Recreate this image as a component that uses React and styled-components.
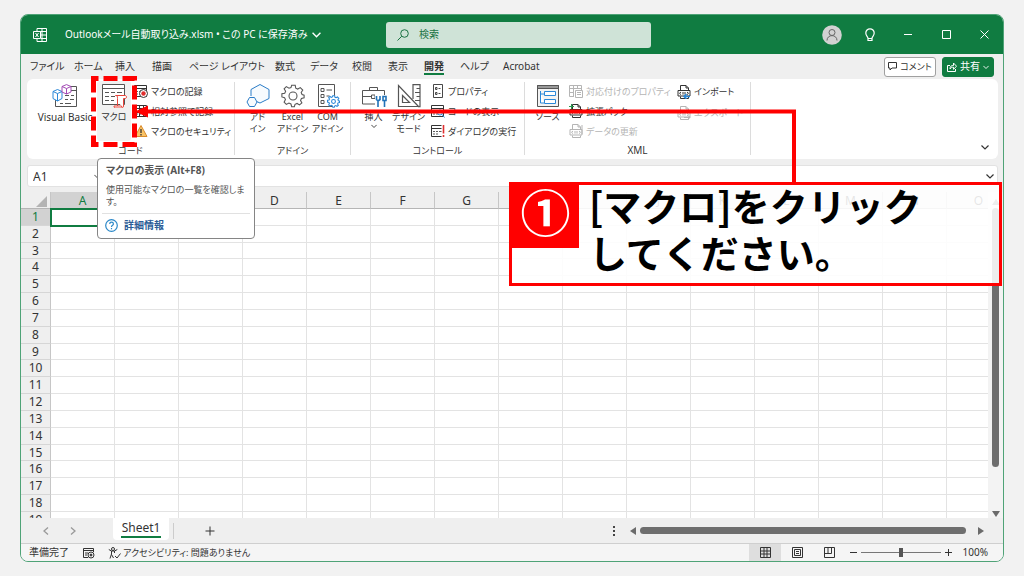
import React from 'react';
import styled, { createGlobalStyle } from 'styled-components';

const GlobalStyle = createGlobalStyle`
* {
    box-sizing: border-box;
}

body {
    margin: 0;
    background-color: #f2f2f2;
    font-family: "Noto Sans", "Noto Sans CJK JP", sans-serif;
    font-feature-settings: "palt";
    font-size: 10px;
    line-height: 13px;
    color: #333;
}

button, input {
    margin: 0;
    padding: 0;
    border: 0;
    background: none;
    font: inherit;
    font-feature-settings: inherit;
    color: inherit;
}

a {
    color: inherit;
    text-decoration: none;
}

svg {
    display: block;
    flex: none;
}
`;

const Page = styled.div`
display: flex;
height: 100vh;
padding: 14px 20px;
`;

const Window = styled.div`
position: relative;
flex: 1;
min-width: 0;
display: flex;
flex-direction: column;
border: 1px solid #4fa377;
border-radius: 8px;
background-color: #efefef;
`;

const TitleBar = styled.header`
display: grid;
grid-template-columns: 365fr 265fr 352fr;
align-items: center;
height: 39px;
flex: none;
border-radius: 7px 7px 0 0;
background-color: #107c41;
color: white;
`;

const FileTitle = styled.div`
display: flex;
align-items: center;
gap: 18px;
padding-left: 12px;
white-space: nowrap;

span {
    display: flex;
    align-items: center;
    gap: 4px;
}
`;

const SearchBox = styled.label`
display: flex;
align-items: center;
gap: 10px;
height: 26px;
padding-left: 11px;
border-radius: 3px;
background-color: #cfe3d7;
color: #1a7344;

input {
    flex: 1;
    min-width: 0;
    outline: none;
}

input::placeholder {
    color: #1a7344;
    opacity: 1;
}
`;

const WindowButtons = styled.div`
display: flex;
justify-content: flex-end;

button {
    display: flex;
    align-items: center;
    justify-content: center;
    width: 38px;
    height: 38px;
}
`;

const TabRow = styled.nav`
display: flex;
align-items: center;
height: 25px;
flex: none;
padding: 0 9px;
`;

const Tab = styled.a`
width: ${(props) => props.$width}px;
white-space: nowrap;
font-weight: ${(props) => (props.$active ? 700 : 400)};

span {
    display: inline-block;
    height: 16px;
    padding-top: 1px;
    border-bottom: 2px solid ${(props) => (props.$active ? '#107c41' : 'transparent')};
}
`;

const TabActions = styled.div`
display: flex;
gap: 6px;
margin-left: auto;
`;

const ActionButton = styled.button`
display: flex;
align-items: center;
justify-content: center;
gap: 3px;
width: 52px;
height: 20px;
border: 1px solid ${(props) => (props.$green ? '#107c41' : '#a0a0a0')};
border-radius: 3px;
background-color: ${(props) => (props.$green ? '#107c41' : 'white')};
color: ${(props) => (props.$green ? 'white' : '#333')};
font-size: ${(props) => (props.$green ? 10 : 9)}px;
white-space: nowrap;
`;

const Ribbon = styled.section`
display: flex;
flex: none;
margin: 0 5px 0 6px;
padding-top: 2px;
height: 80px;
border-radius: 6px;
background-color: white;
`;

const Group = styled.div`
display: flex;
flex-direction: column;
flex: none;
width: ${(props) => props.$width}px;
`;

const GroupBody = styled.div`
display: flex;
gap: ${(props) => props.$gap || 0}px;
height: 60px;
padding-left: ${(props) => props.$left || 5}px;
`;

const GroupLabel = styled.div`
padding-top: 3px;
font-size: ${(props) => props.$size || 9}px;
text-align: center;
`;

const Separator = styled.div`
width: 1px;
margin: 1px 0 4px;
background-color: #dcdcdc;
`;

const BigButton = styled.button`
display: flex;
flex-direction: column;
align-items: center;
width: ${(props) => props.$width || 35}px;
height: 60px;
padding-top: 3px;
border-radius: 3px;
background-color: ${(props) => (props.$hover ? '#f1f1f1' : 'transparent')};
font-size: ${(props) => props.$size || 9}px;
line-height: 12px;
white-space: nowrap;

svg {
    margin-bottom: 3px;
}
`;

const SmallList = styled.div`
display: flex;
flex-direction: column;
width: ${(props) => props.$width || 90}px;
margin-left: ${(props) => props.$left || 0}px;
`;

const SmallButton = styled.button`
display: flex;
align-items: center;
gap: 3px;
height: 21px;
color: ${(props) => (props.disabled ? '#b5b5b5' : '#333')};
font-size: 9px;
white-space: nowrap;
`;

const CollapseButton = styled.button`
align-self: flex-end;
margin: 0 9px 8px auto;
`;

const FormulaBar = styled.div`
display: flex;
align-items: center;
flex: none;
height: 22px;
margin: 6px 5px 5px 6px;
border: 1px solid #e2e2e2;
border-radius: 3px;
background-color: white;

input {
    outline: none;
    font-size: 12px;
}

input:first-child {
    width: 66px;
    padding-left: 5px;
}

input:nth-of-type(2) {
    flex: 1;
    min-width: 0;
}

button {
    padding-right: 3px;
}
`;

const SheetArea = styled.div`
display: flex;
flex: 1;
min-height: 0;
`;

const SheetClip = styled.div`
flex: 1;
min-width: 0;
overflow: hidden;
`;

const Sheet = styled.table`
table-layout: fixed;
width: 990px;
height: 337px;
border-collapse: separate;
border-spacing: 0;
background-color: white;
font-size: 12px;
line-height: 14px;

th {
    padding: 0;
    font-weight: 400;
    background-color: #efefef;
    border-right: 1px solid #c6c6c6;
    border-bottom: 1px solid #d6d6d6;
    overflow: hidden;
}

thead th {
    height: 17px;
    padding-top: 2px;
    border-bottom-color: #b5b5b5;
}

td {
    padding: 0;
    border-right: 1px solid #e3e3e3;
    border-bottom: 1px solid #e3e3e3;
}

th.current {
    background-color: #d2d2d2;
    color: #107c41;
}

td.current {
    outline: 2px solid #107c41;
    outline-offset: -1px;
}

col:first-child {
    width: 30px;
}

thead th:first-child svg {
    margin: 0 3px 0 auto;
}
`;

const VerticalScroll = styled.div`
display: flex;
flex-direction: column;
align-items: center;
gap: 2px;
width: 15px;
padding: 6px 0 0;
background-color: #f3f3f3;

div {
    width: 7px;
    height: 259px;
    border-radius: 4px;
    background-color: #6e6e6e;
}

svg:last-child {
    margin-top: auto;
}
`;

const SheetBar = styled.div`
display: flex;
align-items: center;
flex: none;
height: 25px;
padding: 0 14px 0 20px;
`;

const SheetNav = styled.div`
display: flex;
gap: 17px;
width: 72px;
color: #999;
`;

const SheetTab = styled.button`
align-self: flex-start;
width: 56px;
height: 22px;
border-radius: 0 0 4px 4px;
background-color: white;
font-size: 12px;

span {
    display: inline-block;
    height: 18px;
    padding: 1px 1px 0;
    border-bottom: 2px solid #107c41;
}
`;

const AddSheet = styled.button`
margin-left: 4px;
padding-left: 31px;
border-left: 1px solid #ccc;
`;

const HorizontalScroll = styled.div`
display: flex;
align-items: center;
margin-left: auto;
width: 377px;

div {
    width: 326px;
    height: 7px;
    margin: 0 11px 0 3px;
    border-radius: 4px;
    background-color: #6e6e6e;
}

svg:first-child {
    margin-right: 13px;
}
`;

const StatusBar = styled.footer`
display: flex;
align-items: center;
flex: none;
height: 18px;
padding: 0 15px 0 8px;
border-top: 1px solid #cfcfcf;
border-radius: 0 0 7px 7px;
background-color: #f5f5f5;
font-size: 10px;
white-space: nowrap;
`;

const StatusItem = styled.div`
display: flex;
align-items: center;
gap: 2px;
margin-right: ${(props) => props.$space || 0}px;
font-size: ${(props) => props.$size || 10}px;
`;

const Views = styled.div`
display: flex;
margin-left: auto;
margin-right: 5px;
`;

const ViewButton = styled.button`
display: flex;
align-items: center;
justify-content: center;
width: 32px;
height: 17px;
background-color: ${(props) => (props.$active ? '#dedede' : 'transparent')};
`;

const Zoom = styled.div`
display: flex;
align-items: center;
gap: 4px;

input {
    appearance: none;
    width: 80px;
    height: 1px;
    background-color: #777;
}

input::-webkit-slider-thumb {
    appearance: none;
    width: 4px;
    height: 9px;
    background-color: #555;
}

span {
    width: 32px;
    text-align: right;
}
`;

const Tooltip = styled.div`
position: absolute;
top: 143px;
left: 76px;
width: 158px;
height: 81px;
padding: 5px 4px;
border: 1px solid #858585;
border-radius: 4px;
background-color: white;
color: #555;

h4 {
    margin: 0 0 7px 4px;
    font-size: 10px;
}

p {
    margin: 0 0 5px 4px;
    font-size: 9px;
    line-height: 12px;
}

a {
    display: flex;
    align-items: center;
    gap: 6px;
    padding: 5px 3px 0;
    border-top: 1px solid #e1e1e1;
    color: #2b5c96;
    font-weight: 700;
}
`;

const Marks = styled.svg`
position: absolute;
top: 59px;
left: 68px;
pointer-events: none;
`;

const Callout = styled.aside`
position: absolute;
top: 167px;
left: 488px;
display: flex;
width: 493px;
height: 104px;
border: 3px solid #f00;
background-color: rgba(255, 255, 255, 0.88);
font-family: "Noto Sans CJK JP", sans-serif;
font-feature-settings: normal;
color: black;

strong {
    width: 67px;
    height: 63px;
    background-color: #f00;
    color: white;
    font-size: 50px;
    line-height: 50px;
    text-align: center;
}

p {
    margin: -4px 0 0 10px;
    font-size: 38px;
    font-weight: 700;
    line-height: 47px;
    white-space: nowrap;
}
`;

const line = { fill: 'none', stroke: 'currentColor', strokeWidth: 1 };

const Chevron = ({ size = 8 }) => (
    <svg width={size} height={size} viewBox="0 0 8 8" {...line} strokeWidth="1.2"><path d="M.5 2.500L4 6l3.500-3.500" /></svg>
);

const VisualBasicIcon = () => (
    <svg width="26" height="24" viewBox="0 0 26 24" fill="none" stroke="#555">
        <path d="M3.500 14v8.500h21V2.500h-6M19 6.500h6M13 11.500h4m2 0h3M13 15.500h3m2 0h4M8 19.500h3m2 0h6" />
        <path d="M1 7.500l4.500-2 4.500 2v7L5.500 17 1 14.500zM1 7.500l4.500 2 4.500-2M5.500 9.500V17" fill="white" stroke="#2b88d8" />
        <path d="M10 2.500L14.500.6 19 2.500V8l-4.500 2L10 8zM10 2.500l4.500 2 4.500-2M14.500 4.500V10" fill="white" stroke="#a34bb5" />
    </svg>
);

const MacroIcon = () => (
    <svg width="26" height="24" viewBox="0 0 26 24" fill="none" stroke="#555">
        <path d="M1.500.5h22v20h-22z" fill="white" />
        <path d="M1.500 4.500h22M4 8.500h4m2 0h4m2 0h5M4 12.500h4m2 0h4M4 16.500h4m2 0h3" />
        <path d="M14.500 11.500h9.500c2 0 2 3 0 3h-1.500v7.500c0 2-2 2-2 0H13c0 1.800.8 2 2 2h6M14.500 11.500c2 0 2 1 2 3V22" fill="white" stroke="#e8443a" />
    </svg>
);

const HexIcon = () => (
    <svg width="24" height="24" viewBox="0 0 24 24" fill="#f7fbfe" stroke="#2b7cc7">
        <path d="M8.500 1.500h9l5.500 5-2.500 9-8 3.500L5 13V5z" stroke="none" />
        <path d="M5 12V5.500l9-5 9 5v9L14 19l-3.500-1.500" />
        <path d="M3.500 13.500h5L11 18l-2.500 4.500h-5L1 18z" />
    </svg>
);

const gearPath = 'M10 1h4l.6 3.200 2.200 1 2.900-1.700 2.800 2.800-1.800 2.800 1 2.300L24 12v3l-3 .8-1 2.300 1.500 2.700-2.700 2.200-2.700-1.600-2.300 1L13 25h-3l-.8-3-2.300-1L4 22.500 1.500 20 3 17l-1-2-3-1v-3.500l3.200-.6 1-2.200L1.500 5 4 2.500l3 1.800 2.200-.8z';

const GearIcon = () => (
    <svg width="24" height="24" viewBox="-2 0 27 26" fill="none" stroke="#555" strokeWidth="1.200">
        <path d={gearPath} />
        <circle cx="11.500" cy="13" r="4.500" />
    </svg>
);

const ComIcon = () => (
    <svg width="24" height="24" viewBox="0 0 24 24" fill="none" stroke="#555">
        <path d="M2.500.5h16v22h-16zM5 4.500h3v3H5zM5 10.500h3v3H5zM5 16.500h3v3H5zM10.500 6H16M10.500 12h3" />
        <svg x="11" y="11" width="13" height="13" viewBox="-2 0 27 26" stroke="#2b88d8" strokeWidth="2.200">
            <path d={gearPath} fill="white" />
            <circle cx="11.500" cy="13" r="4" />
        </svg>
    </svg>
);

const ToolboxIcon = () => (
    <svg width="26" height="24" viewBox="0 0 26 24" fill="none" stroke="#555">
        <path d="M1.500 6.500h22V20h-22zM8.500 6.500v-3h8v3M1.500 12.500h9M14 12.500h9M10.500 11h3.500v3.500h-3.500z" />
        <path d="M14 11h12v13H14z" fill="white" stroke="none" />
        <path d="M15.500 12v3.500l1.500 1.500V23M19 12v3.500L17 17M22 12.500h3v4h-3zM23.500 16.500V23" stroke="#2072b8" strokeWidth="1.600" />
    </svg>
);

const DesignIcon = () => (
    <svg width="24" height="24" viewBox="0 0 24 24" fill="none" stroke="#555" strokeWidth="1.200">
        <path d="M1.500 1.500v21h20zM5.500 11.500v7h7z" />
        <path d="M16 15V.6h7v22h-2M19.500 4.500H23M18 8.500h5M19.500 12.500H23M18 16.500h5" />
    </svg>
);

const SourceIcon = () => (
    <svg width="24" height="24" viewBox="0 0 24 24" fill="none" stroke="#555">
        <path d="M1.500 1.500h21v21h-21z" fill="#f3f3f3" />
        <path d="M1.500 1.500h21v3h-21z" fill="#999" />
        <path d="M4.500 7v12H8M4.500 10H8M8.500 7.500h11v4h-11zM8.500 15.500h11v4h-11z" stroke="#2b88d8" fill="#fff" />
    </svg>
);

const SheetLines = ({ children, ...rest }) => (
    <svg width="14" height="14" viewBox="0 0 14 14" {...line} {...rest}>
        <path d="M.5 1.500h12v11H.5zM.5 4.500h12" />
        <path d="M2 7.500h2m1 0h2m1 0h3M2 10h2m1 0h2" strokeWidth=".8" />
        {children}
    </svg>
);

const RecordIcon = () => (
    <SheetLines>
        <circle cx="9.500" cy="9.500" r="4" fill="white" />
        <circle cx="9.500" cy="9.500" r="2.200" fill="#e03030" stroke="none" />
    </SheetLines>
);

const RelativeIcon = () => (
    <SheetLines><path d="M5.500 1.500v11M9.500 1.500v11M.5 8.500h12" /><path d="M6 5h3v3H6z" fill="#e03030" stroke="none" /></SheetLines>
);

const WarningIcon = () => (
    <svg width="14" height="14" viewBox="0 0 14 14">
        <path d="M7 1.500L13 12.500H1z" fill="#f8c367" stroke="#d98a2b" strokeLinejoin="round" />
        <path d="M7 5v4M7 10v1.500" stroke="#333" strokeWidth="1.300" />
    </svg>
);

const PropertyIcon = () => (
    <svg width="14" height="14" viewBox="0 0 14 14" {...line} strokeWidth=".9">
        <path d="M2.500.5h9v13h-9zM4.500 3.500H6v2H4.500zM4.500 8.500H6v2H4.500zM7.500 4.500h2M7.500 9.500h2" />
    </svg>
);

const CodeIcon = () => (
    <SheetLines><circle cx="9" cy="8.500" r="2.500" fill="white" stroke="#2b88d8" /><path d="M11 10.500l2.500 3" stroke="#2b88d8" /></SheetLines>
);

const DialogIcon = () => (
    <SheetLines><path d="M10.500 0h4v14h-4z" fill="white" stroke="none" /><path d="M12.500 1v8.500M12.500 11v2" stroke="#e03030" strokeWidth="1.600" /></SheetLines>
);

const MapIcon = () => (
    <svg width="14" height="14" viewBox="0 0 14 14" {...line}>
        <path d="M5 12.500H.5v-11h12V6M.5 4.500h12M.5 8.500H5M4.500 1.500v11M8.500 1.500V5" />
        <path d="M6.500 6.500h7v7h-7zM8 8.500h4M8 10.500h4" />
    </svg>
);

const XmlIcon = ({ children }) => (
    <svg width="14" height="14" viewBox="0 0 14 14" {...line}>
        <path d="M3.500 5V.5h5.500l2.500 2.500v2M9 .5V3h2.500M3.500 11.500v2h8v-2M1 5.500h12v5.500H1z" />
        <path d="M4 7L2.500 8.300 4 9.600M10 7l1.500 1.300L10 9.600M6 7v2.600M8 7v2.600" />
        {children}
    </svg>
);

const Triangle = ({ rotate = 0 }) => (
    <svg width="8" height="8" viewBox="0 0 8 8"><path d="M4 1L8 7H0z" fill="#6b6b6b" transform={`rotate(${rotate} 4 4)`} /></svg>
);

const tabs = [
    ['ファイル', 44], ['ホーム', 41], ['挿入', 37], ['描画', 37], ['ページ レイアウト', 86], ['数式', 35],
    ['データ', 42], ['校閲', 36], ['表示', 36], ['開発', 36], ['ヘルプ', 43], ['Acrobat', 44],
];

const columns = 'ABCDEFGHIJKLMNO'.split('');
const rows = Array.from({ length: 19 }, (_, i) => i + 1);

const App = () => {
    return (
        <Page>
            <GlobalStyle />
            <Window>
                <TitleBar>
                    <FileTitle>
                        <svg width="14" height="14" viewBox="0 0 14 14" fill="none" stroke="white">
                            <path d="M4 3.500v-3h9.500v13H4v-3M4 3.500h9.500M8 7h5.500M8 10.500h5.500M9 .5v13" />
                            <path d="M.5 3.500h7v7h-7z" fill="#107c41" />
                            <path d="M2.500 5l3 4M5.500 5l-3 4" />
                        </svg>
                        <span>Outlookメール自動取り込み.xlsm • この PC に保存済み <Chevron size={9} /></span>
                    </FileTitle>
                    <SearchBox>
                        <svg width="12" height="12" viewBox="0 0 12 12" {...line}><circle cx="7.500" cy="4.500" r="3.800" /><path d="M4.800 7.200L.5 11.500" /></svg>
                        <input type="search" placeholder="検索" aria-label="検索" />
                    </SearchBox>
                    <WindowButtons>
                        <button aria-label="アカウント">
                            <svg width="20" height="20" viewBox="0 0 20 20" fill="none" stroke="#666">
                                <circle cx="10" cy="10" r="9.800" fill="#d2d2d2" stroke="none" />
                                <circle cx="10" cy="7.500" r="3" /><path d="M5 15.500c0-6.500 10-6.500 10 0" />
                            </svg>
                        </button>
                        <button aria-label="ヒント">
                            <svg width="14" height="14" viewBox="0 0 14 14" {...line} strokeWidth="1.200"><path d="M5 10.500C5 8.500 2.800 8 2.800 5a4.200 4.200 0 018.400 0c0 3-2.200 3.500-2.200 5.500zM5 10.500v2h4v-2" /></svg>
                        </button>
                        <button aria-label="最小化"><svg width="8" height="8" {...line}><path d="M0 3.500h8" /></svg></button>
                        <button aria-label="最大化"><svg width="9" height="9" {...line}><path d="M.5.5h8v8h-8z" /></svg></button>
                        <button aria-label="閉じる"><svg width="9" height="9" {...line}><path d="M.5.5l8 8M8.500.5l-8 8" /></svg></button>
                    </WindowButtons>
                </TitleBar>

                <TabRow>
                    {tabs.map(([name, width]) => (
                        <Tab key={name} href="#" $width={width} $active={name === '開発'}><span>{name}</span></Tab>
                    ))}
                    <TabActions>
                        <ActionButton>
                            <svg width="9" height="9" viewBox="0 0 9 9" {...line}><path d="M.5.5h8v5.500H4L2 8V6H.5z" /></svg>
                            コメント
                        </ActionButton>
                        <ActionButton $green>
                            <svg width="10" height="10" viewBox="0 0 10 10" {...line}><path d="M3 3.500H.5v6h8V7M3 7c0-3 1.500-3.500 3.500-3.500V1l3 3.200-3 3.200V5.200C5 5.200 4 5.500 3 7z" /></svg>
                            共有 <Chevron size={6} />
                        </ActionButton>
                    </TabActions>
                </TabRow>

                <Ribbon>
                    <Group $width={207}>
                        <GroupBody $left={9} $gap={3}>
                            <BigButton $width={58} $size={10}><VisualBasicIcon />Visual Basic</BigButton>
                            <BigButton $width={34} $hover><MacroIcon />マクロ</BigButton>
                            <SmallList>
                                <SmallButton><RecordIcon />マクロの記録</SmallButton>
                                <SmallButton><RelativeIcon />相対参照で記録</SmallButton>
                                <SmallButton><WarningIcon />マクロのセキュリティ</SmallButton>
                            </SmallList>
                        </GroupBody>
                        <GroupLabel>コード</GroupLabel>
                    </Group>
                    <Separator />
                    <Group $width={115}>
                        <GroupBody>
                            <BigButton><HexIcon />アド<br />イン</BigButton>
                            <BigButton><GearIcon />Excel<br />アドイン</BigButton>
                            <BigButton><ComIcon />COM<br />アドイン</BigButton>
                        </GroupBody>
                        <GroupLabel>アドイン</GroupLabel>
                    </Group>
                    <Separator />
                    <Group $width={173}>
                        <GroupBody>
                            <BigButton><ToolboxIcon />挿入<Chevron size={6} /></BigButton>
                            <BigButton><DesignIcon />デザイン<br />モード</BigButton>
                            <SmallList $left={5}>
                                <SmallButton><PropertyIcon />プロパティ</SmallButton>
                                <SmallButton><CodeIcon />コードの表示</SmallButton>
                                <SmallButton><DialogIcon />ダイアログの実行</SmallButton>
                            </SmallList>
                        </GroupBody>
                        <GroupLabel>コントロール</GroupLabel>
                    </Group>
                    <Separator />
                    <Group $width={225}>
                        <GroupBody>
                            <BigButton><SourceIcon />ソース</BigButton>
                            <SmallList $width={108} $left={4}>
                                <SmallButton disabled><MapIcon />対応付けのプロパティ</SmallButton>
                                <SmallButton><XmlIcon><path d="M2.500 0v5M0 2.500h5" stroke="#2a9a50" /></XmlIcon>拡張パック</SmallButton>
                                <SmallButton disabled><XmlIcon><path d="M13 1v9" /></XmlIcon>データの更新</SmallButton>
                            </SmallList>
                            <SmallList $width={70}>
                                <SmallButton><XmlIcon><path d="M13 11.500H7M9.500 9L7 11.500 9.500 14" stroke="#2b88d8" strokeWidth="1.500" /></XmlIcon>インポート</SmallButton>
                                <SmallButton disabled><XmlIcon><path d="M7 11.500h6M10.500 9l2.500 2.500-2.500 2.500" /></XmlIcon>エクスポート</SmallButton>
                            </SmallList>
                        </GroupBody>
                        <GroupLabel $size={10}>XML</GroupLabel>
                    </Group>
                    <Separator />
                    <CollapseButton aria-label="リボンを折りたたむ"><Chevron /></CollapseButton>
                </Ribbon>

                <FormulaBar>
                    <input aria-label="名前ボックス" defaultValue="A1" />
                    <button aria-label="名前の一覧"><Chevron size={6} /></button>
                    <input aria-label="数式バー" />
                    <button aria-label="数式バーの展開"><Chevron /></button>
                </FormulaBar>

                <SheetArea>
                    <SheetClip>
                        <Sheet>
                            <colgroup>
                                <col />
                                {columns.map((c) => <col key={c} />)}
                            </colgroup>
                            <thead>
                                <tr>
                                    <th><svg width="11" height="11"><path d="M11 0v11H0z" fill="#b4b4b4" /></svg></th>
                                    {columns.map((c) => <th key={c} className={c === 'A' ? 'current' : ''}>{c}</th>)}
                                </tr>
                            </thead>
                            <tbody>
                                {rows.map((r) => (
                                    <tr key={r}>
                                        <th className={r === 1 ? 'current' : ''}>{r}</th>
                                        {columns.map((c) => <td key={c} className={r === 1 && c === 'A' ? 'current' : ''} />)}
                                    </tr>
                                ))}
                            </tbody>
                        </Sheet>
                    </SheetClip>
                    <VerticalScroll>
                        <Triangle />
                        <div />
                        <Triangle rotate={180} />
                    </VerticalScroll>
                </SheetArea>

                <SheetBar>
                    <SheetNav>
                        <button aria-label="前のシート"><svg width="10" height="10" {...line} strokeWidth="1.300"><path d="M7 1.500L3 5l4 3.500" /></svg></button>
                        <button aria-label="次のシート"><svg width="10" height="10" {...line} strokeWidth="1.300"><path d="M3 1.500L7 5 3 8.500" /></svg></button>
                    </SheetNav>
                    <SheetTab><span>Sheet1</span></SheetTab>
                    <AddSheet aria-label="新しいシート"><svg width="10" height="16" {...line}><path d="M5 3.500v9M.5 8h9" /></svg></AddSheet>
                    <HorizontalScroll>
                        <svg width="4" height="10" fill="#444"><path d="M1 0h2v2H1zM1 4h2v2H1zM1 8h2v2H1z" /></svg>
                        <Triangle rotate={-90} />
                        <div />
                        <Triangle rotate={90} />
                    </HorizontalScroll>
                </SheetBar>

                <StatusBar>
                    <StatusItem $space={14}>準備完了</StatusItem>
                    <StatusItem $space={13}>
                        <svg width="12" height="12" viewBox="0 0 12 12" {...line}>
                            <path d="M5 10.500H.5v-9h10V5M.5 3.500h10M2 6h3M2 8h2" /><circle cx="8" cy="8" r="3" /><circle cx="8" cy="8" r="1" fill="currentColor" />
                        </svg>
                    </StatusItem>
                    <StatusItem $size={9}>
                        <svg width="13" height="12" viewBox="0 0 13 12" {...line}>
                            <circle cx="5" cy="2" r="1.500" /><path d="M.8 2.500L3.500 4v3L2 11.500M3.500 4h3l2.800-1.500M6.500 4v2M3.500 7.500L5.500 11M7 9l2 2 3.500-4.500" />
                        </svg>
                        アクセシビリティ: 問題ありません
                    </StatusItem>
                    <Views>
                        <ViewButton $active aria-label="標準"><svg width="11" height="11" {...line}><path d="M.5.5h10v10H.5zM.5 4h10M.5 7h10M4 .5v10M7 .5v10" /></svg></ViewButton>
                        <ViewButton aria-label="ページ レイアウト表示"><svg width="11" height="11" {...line}><path d="M.5.5h10v10H.5zM2.500 2.500h6v6h-6zM4 4.500h3M4 6.500h3" /></svg></ViewButton>
                        <ViewButton aria-label="改ページ プレビュー"><svg width="11" height="11" {...line}><path d="M.5.5h10v10H.5zM.5 6.500h7v-6M4 .5v6" /></svg></ViewButton>
                    </Views>
                    <Zoom>
                        <button aria-label="縮小"><svg width="7" height="7" {...line}><path d="M0 3.500h7" /></svg></button>
                        <input type="range" aria-label="ズーム" defaultValue="50" />
                        <button aria-label="拡大"><svg width="7" height="7" {...line}><path d="M0 3.500h7M3.500 0v7" /></svg></button>
                        <span>100%</span>
                    </Zoom>
                </StatusBar>

                <Tooltip role="tooltip">
                    <h4>マクロの表示 (Alt+F8)</h4>
                    <p>使用可能なマクロの一覧を確認します。</p>
                    <a href="#">
                        <svg width="13" height="13" viewBox="0 0 13 13" fill="none" stroke="#2b88c8" strokeWidth="1.200">
                            <circle cx="6.500" cy="6.500" r="5.800" /><path d="M4.700 5c0-2.400 3.700-2.400 3.700 0 0 1.400-1.900 1.300-1.900 3M6.500 9v1.200" />
                        </svg>
                        詳細情報
                    </a>
                </Tooltip>

                <Marks width="710" height="110" fill="none" stroke="#f00">
                    <path d="M4.500 4.500h41v66h-41z" strokeWidth="5" strokeDasharray="14 5" strokeDashoffset="9" />
                    <path d="M56 37.500h649V110" strokeWidth="4" />
                    <path d="M46 37.500L59 31.500v12z" fill="#f00" stroke="none" />
                </Marks>
                <Callout>
                    <strong>①</strong>
                    <p>[マクロ]をクリック<br />してください。</p>
                </Callout>
            </Window>
        </Page>
    );
};

export default App;
